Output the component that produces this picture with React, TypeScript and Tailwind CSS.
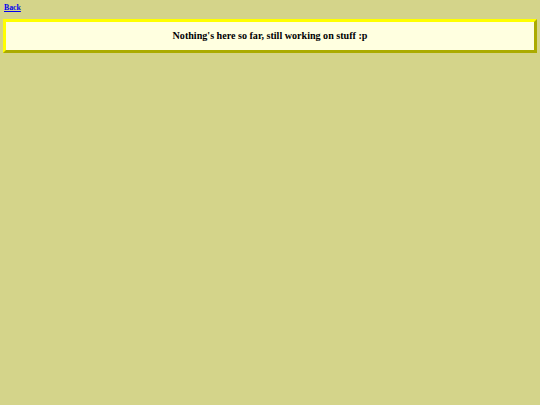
import React from "react";

export default function App() {
  return (
    <div className="min-h-[405px] w-full bg-[#d4d48a] px-[3px] pt-[3px]" style={{ fontFamily: '"Liberation Serif", "Times New Roman", serif' }}>
      <a href="#" className="ml-[1px] block w-fit text-[7.8px] font-bold text-[#0000ee] underline leading-[10px]">
        Back
      </a>
      <div className="mt-[6px] flex h-[34px] items-center justify-center border-[3px] border-[#ffff00] bg-[#ffffe0] [border-style:outset]">
        <h1 className="text-[10.1px] font-bold text-black">Nothing's here so far, still working on stuff :p</h1>
      </div>
    </div>
  );
}
